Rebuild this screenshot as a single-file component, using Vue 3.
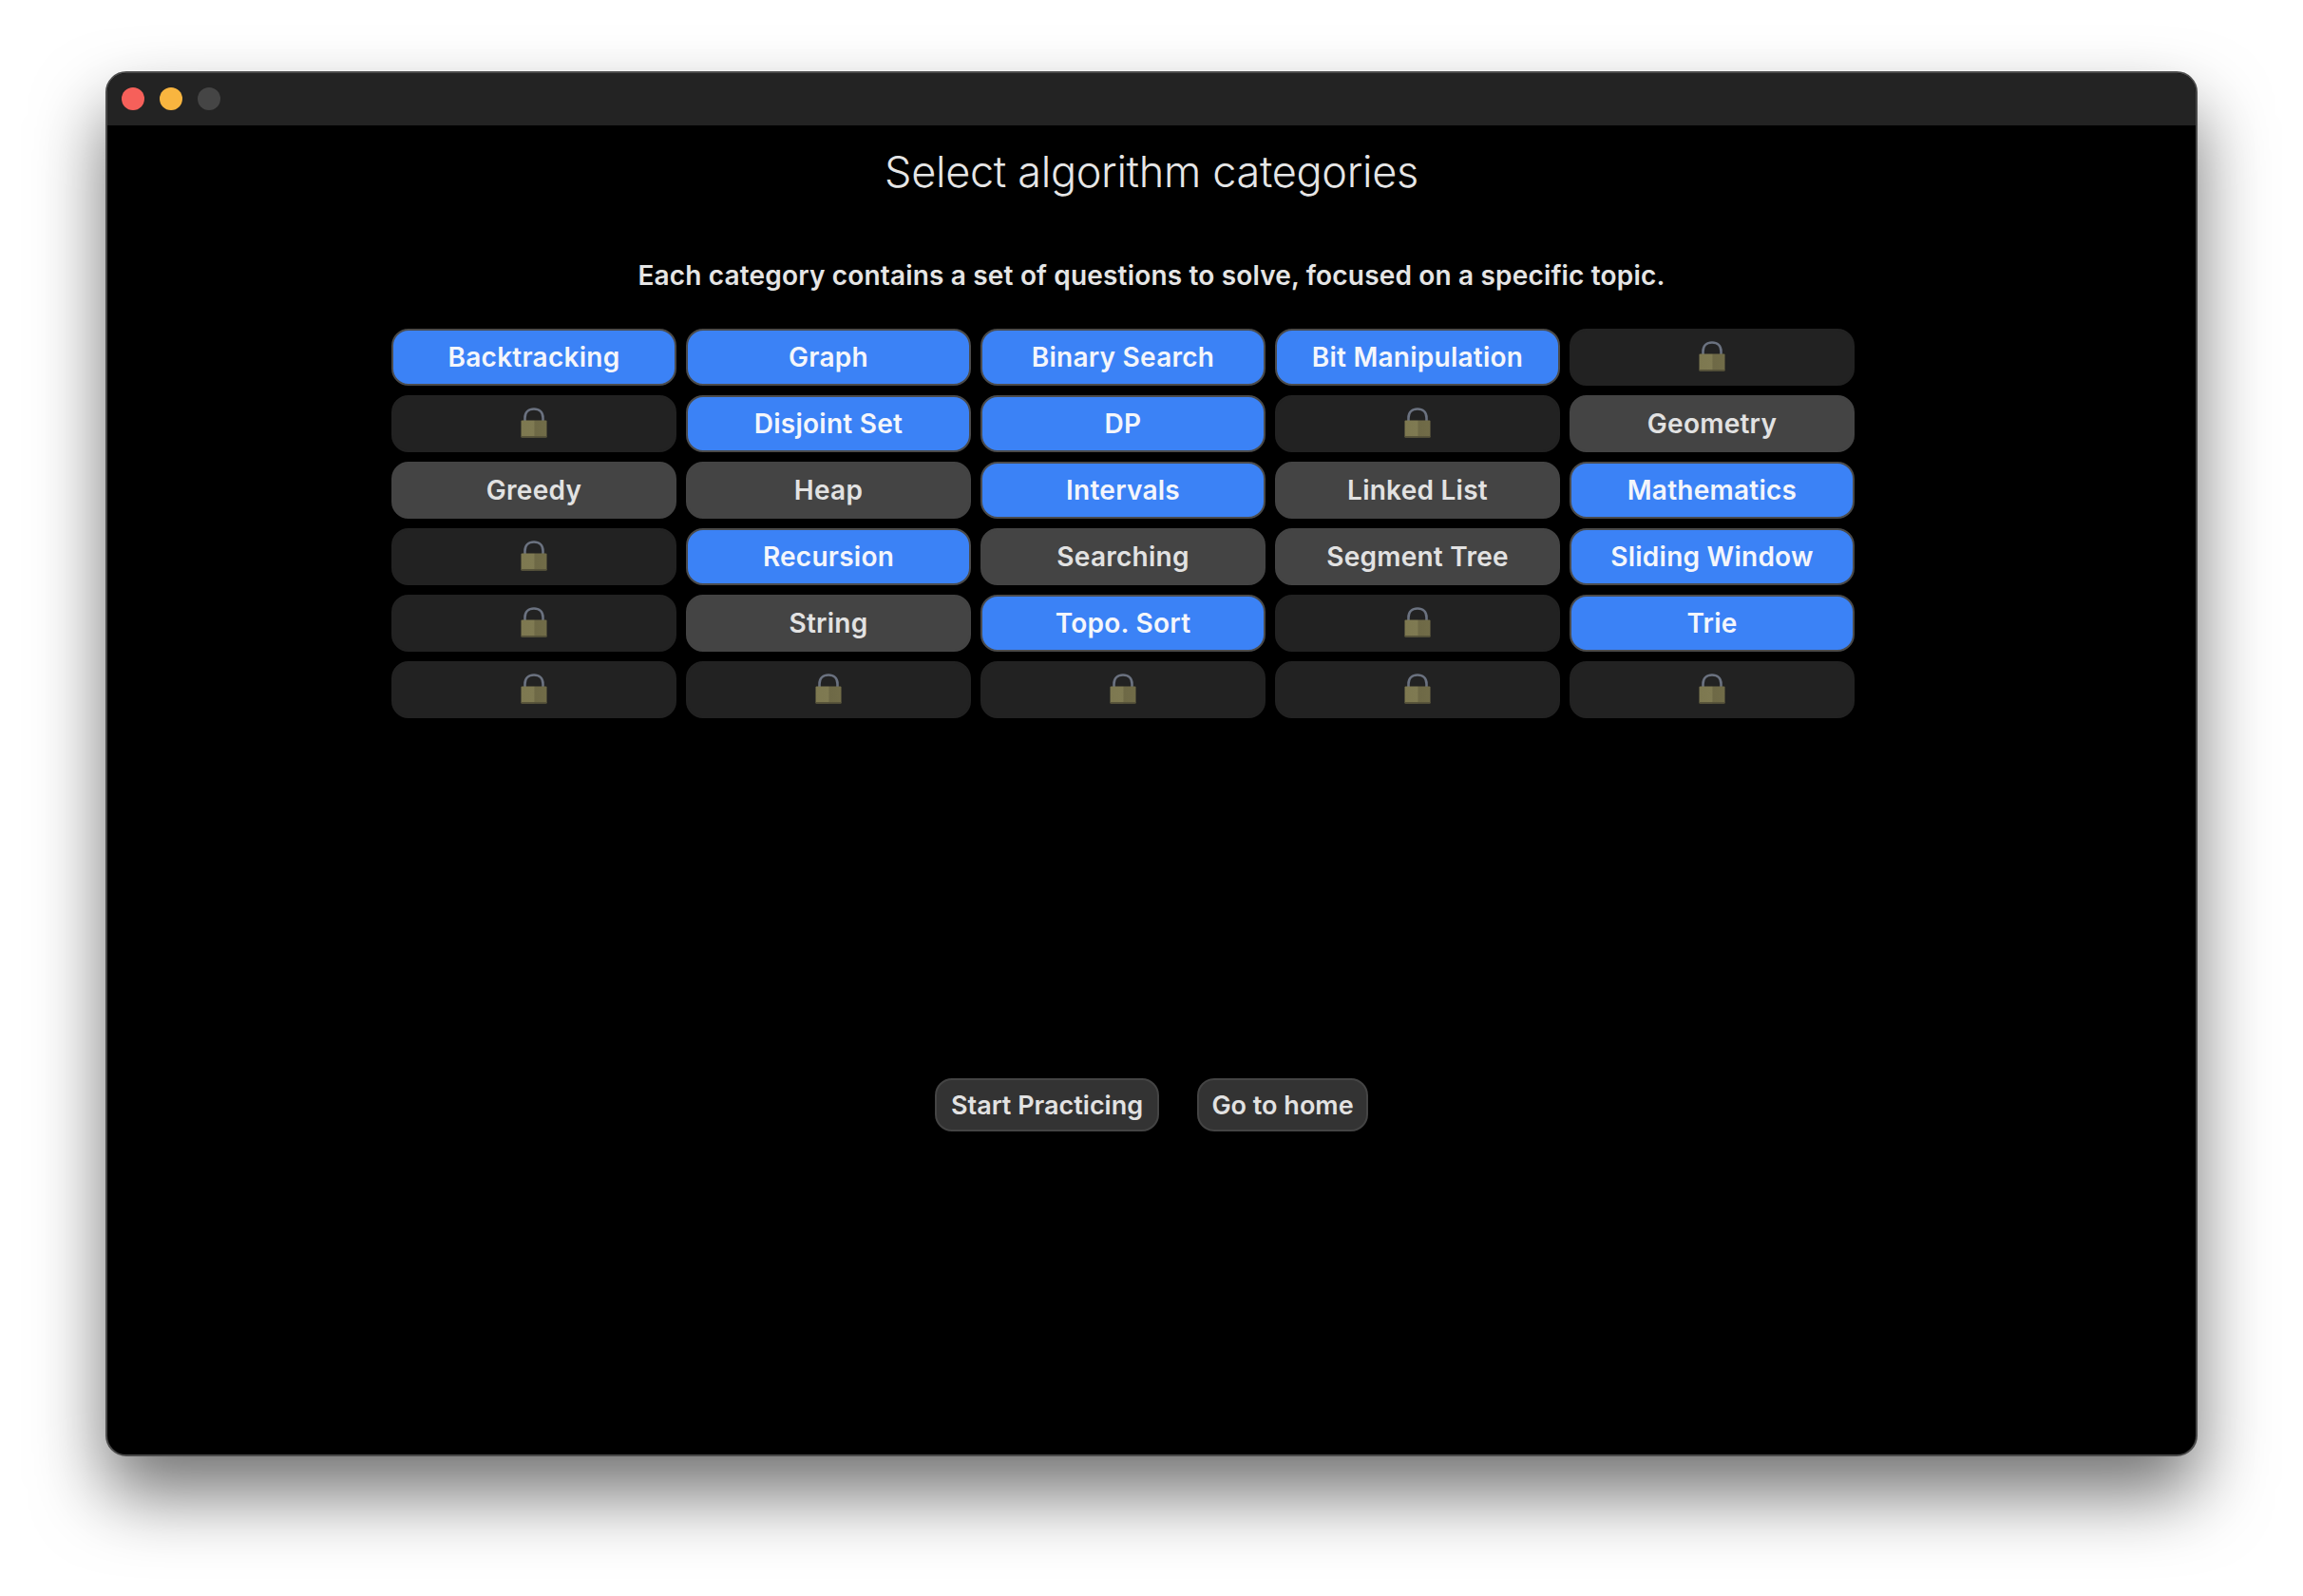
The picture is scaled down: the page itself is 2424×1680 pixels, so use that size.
<script setup>
const categories = [
  { name: "Backtracking", state: "on" },
  { name: "Graph", state: "on" },
  { name: "Binary Search", state: "on" },
  { name: "Bit Manipulation", state: "on" },
  { state: "locked" },
  { state: "locked" },
  { name: "Disjoint Set", state: "on" },
  { name: "DP", state: "on" },
  { state: "locked" },
  { name: "Geometry", state: "off" },
  { name: "Greedy", state: "off" },
  { name: "Heap", state: "off" },
  { name: "Intervals", state: "on" },
  { name: "Linked List", state: "off" },
  { name: "Mathematics", state: "on" },
  { state: "locked" },
  { name: "Recursion", state: "on" },
  { name: "Searching", state: "off" },
  { name: "Segment Tree", state: "off" },
  { name: "Sliding Window", state: "on" },
  { state: "locked" },
  { name: "String", state: "off" },
  { name: "Topo. Sort", state: "on" },
  { state: "locked" },
  { name: "Trie", state: "on" },
  { state: "locked" },
  { state: "locked" },
  { state: "locked" },
  { state: "locked" },
  { state: "locked" },
];
</script>

<template>
  <div class="page">
    <div class="window">
      <div class="titlebar">
        <span class="dot red"></span>
        <span class="dot yellow"></span>
        <span class="dot grey"></span>
      </div>
      <main class="content">
        <h1 class="title">Select algorithm categories</h1>
        <p class="subtitle">
          Each category contains a set of questions to solve, focused on a specific topic.
        </p>
        <div class="grid">
          <button v-for="(cat, index) in categories" :key="index" class="cat" :class="cat.state">
            <svg v-if="cat.state === 'locked'" class="lock" width="28" height="32" viewBox="0 0 28 32">
              <defs>
                <linearGradient :id="'body' + index" x1="0" x2="1" y1="0" y2="0">
                  <stop offset="0" stop-color="#7d7850" />
                  <stop offset="0.48" stop-color="#7f7a52" />
                  <stop offset="0.55" stop-color="#6e6946" />
                  <stop offset="1" stop-color="#716c48" />
                </linearGradient>
              </defs>
              <path d="M4.500 15V11C4.500 5 8.500 1.500 14 1.500s9.500 3.500 9.500 9.500V15" fill="none" stroke="#6b7280" stroke-width="2.600" />
              <rect x="0.500" y="13.500" width="27" height="18" rx="1" :fill="'url(#body' + index + ')'" />
              <rect x="0.500" y="30" width="27" height="1.500" fill="#57533a" />
            </svg>
            <template v-else>{{ cat.name }}</template>
          </button>
        </div>
        <div class="actions">
          <button class="action">Start Practicing</button>
          <button class="action">Go to home</button>
        </div>
      </main>
    </div>
  </div>
</template>

<style>
html,
body {
  margin: 0;
  background: #fff;
}
</style>

<style scoped>
.page {
  box-sizing: border-box;
  width: 2424px;
  height: 1680px;
  padding: 75px 111px 147px;
  overflow: hidden;
  font-family: Inter, "Liberation Sans", sans-serif;
}

.window {
  box-sizing: border-box;
  height: 1458px;
  background: #000;
  border: 2px solid #4a4a4a;
  border-radius: 22px;
  box-shadow: 0 40px 75px rgba(0, 0, 0, 0.55);
  overflow: hidden;
}

.titlebar {
  height: 55px;
  background: #232323;
  display: flex;
  align-items: center;
  gap: 16px;
  padding-left: 15px;
  padding-bottom: 1px;
  box-sizing: border-box;
}

.dot {
  width: 24px;
  height: 24px;
  border-radius: 50%;
}

.red {
  background: #f6605a;
}

.yellow {
  background: #f9b53f;
}

.grey {
  background: #454545;
}

.content {
  display: flex;
  flex-direction: column;
  align-items: center;
}

.title {
  margin: 21px 0 0;
  font-size: 45px;
  line-height: 56px;
  font-weight: 300;
  letter-spacing: -0.3px;
  color: #e6e6e6;
}

.subtitle {
  margin: 64px 0 0;
  font-size: 28px;
  line-height: 34px;
  font-weight: 600;
  letter-spacing: 0.17px;
  color: #e5e5e5;
}

.grid {
  margin: 39px 60px 0 0;
  display: grid;
  grid-template-columns: repeat(5, 300px);
  grid-auto-rows: 60px;
  gap: 10px;
}

.cat {
  box-sizing: border-box;
  display: flex;
  align-items: center;
  justify-content: center;
  border-radius: 18px;
  border: 2px solid transparent;
  padding: 0;
  font-family: inherit;
  font-size: 28px;
  font-weight: 600;
  letter-spacing: 0.25px;
}

.lock {
  margin-bottom: 3px;
}

.on {
  background: #3b82f6;
  border-color: #4b4b4b;
  color: #f4f6fb;
}

.off {
  background: #444;
  border-color: #444;
  color: #e2e2e2;
}

.locked {
  background: #222;
  border-color: #222;
}

.actions {
  margin-top: 379px;
  display: grid;
  grid-template-columns: 236px 180px;
  gap: 40px;
}

.action {
  box-sizing: border-box;
  height: 56px;
  padding: 0;
  background: #333;
  border: 2px solid #444;
  border-radius: 18px;
  color: #e2e2e2;
  font-family: inherit;
  font-size: 27px;
  font-weight: 600;
}
</style>
